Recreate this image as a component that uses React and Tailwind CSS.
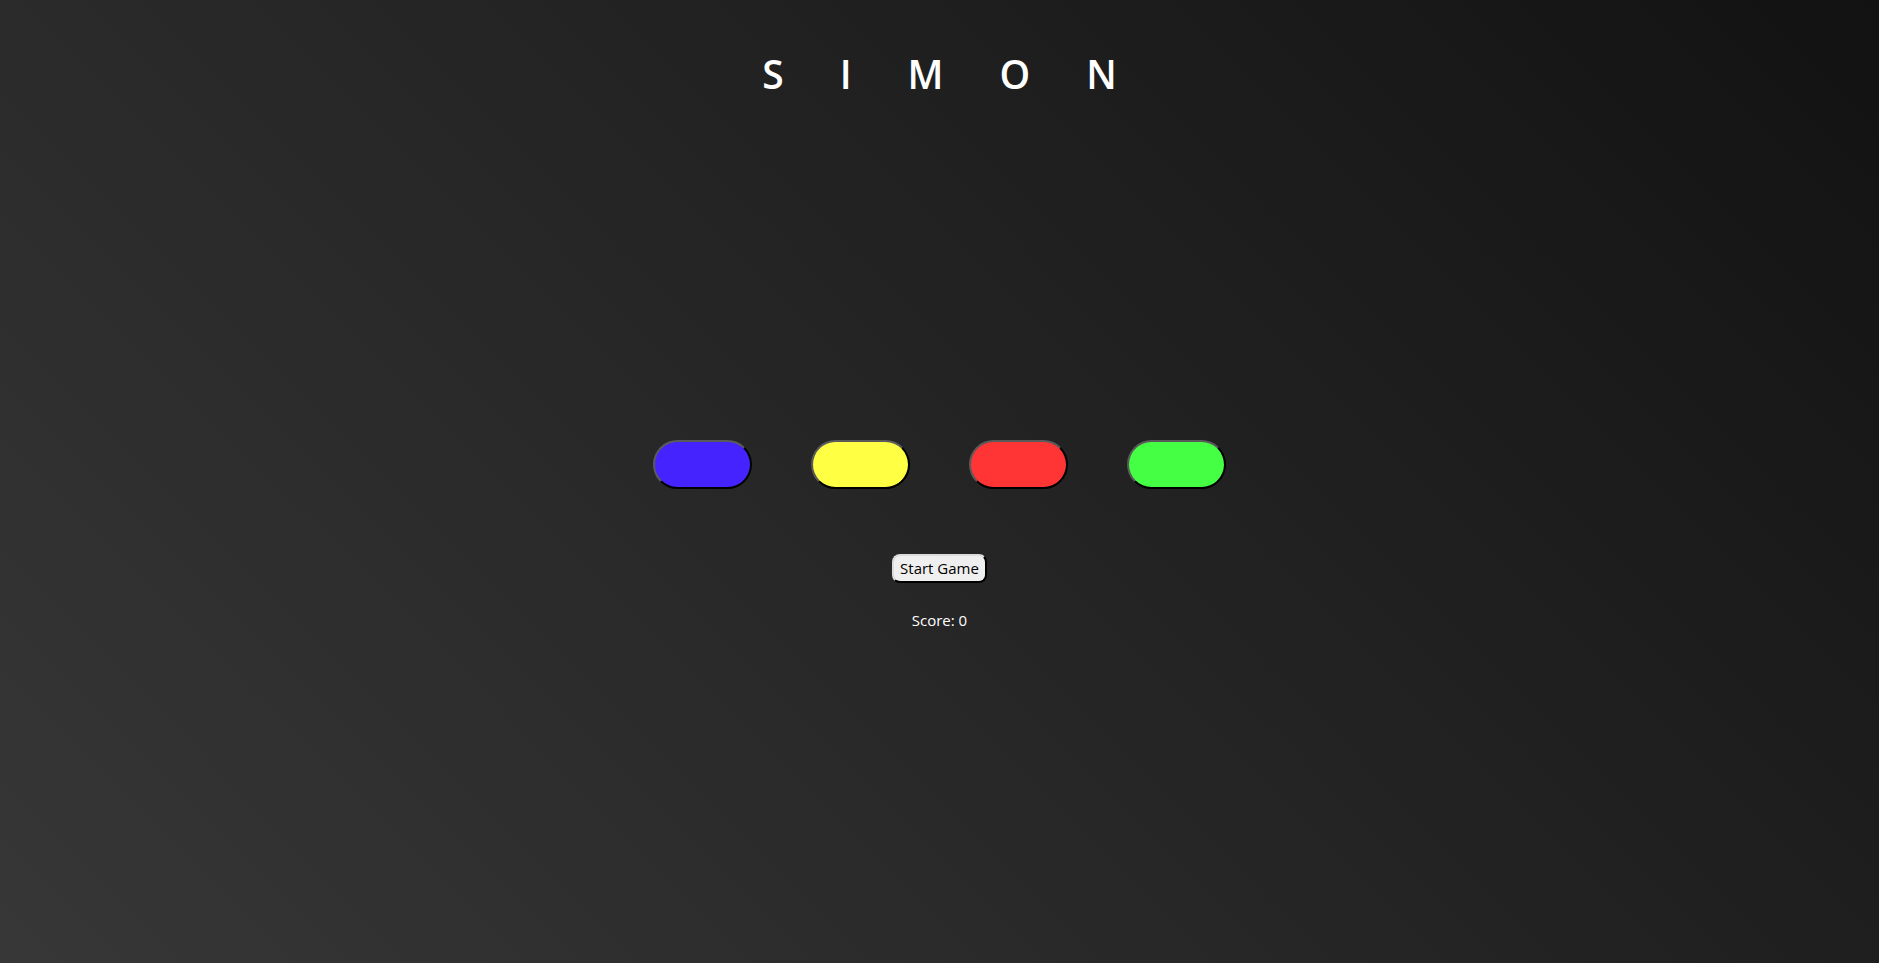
import React from "react";

const pads = [
  { name: "blue", bg: "bg-[#4423ff]" },
  { name: "yellow", bg: "bg-[#ffff44]" },
  { name: "red", bg: "bg-[#ff3535]" },
  { name: "green", bg: "bg-[#45ff45]" },
];

export default function App() {
  return (
    <div className="min-h-[963px] w-full bg-[linear-gradient(45deg,#373737,#121212)] text-white font-['Open_Sans','Liberation_Sans',sans-serif] flex flex-col items-center">
      {/* Title */}
      <h1 className="mt-[47px] pl-[56px] text-[39px] leading-[54px] font-semibold tracking-[56px]">
        SIMON
      </h1>

      {/* Pads */}
      <div className="mt-[339px] flex gap-[59px]">
        {pads.map((p) => (
          <button
            key={p.name}
            className={`w-[99px] h-[49px] rounded-full border-2 border-t-[#5a5a5a] border-l-[#5a5a5a] border-b-black border-r-black ${p.bg}`}
          />
        ))}
      </div>

      {/* Controls */}
      <button className="mt-[65px] h-[29px] px-[6px] rounded-[8px] bg-[#efefef] text-black text-[15px] leading-none border-2 border-t-[#dcdcdc] border-l-[#dcdcdc] border-b-black border-r-black">
        Start Game
      </button>
      <p className="mt-[26px] text-[15px]">Score: 0</p>
    </div>
  );
}
